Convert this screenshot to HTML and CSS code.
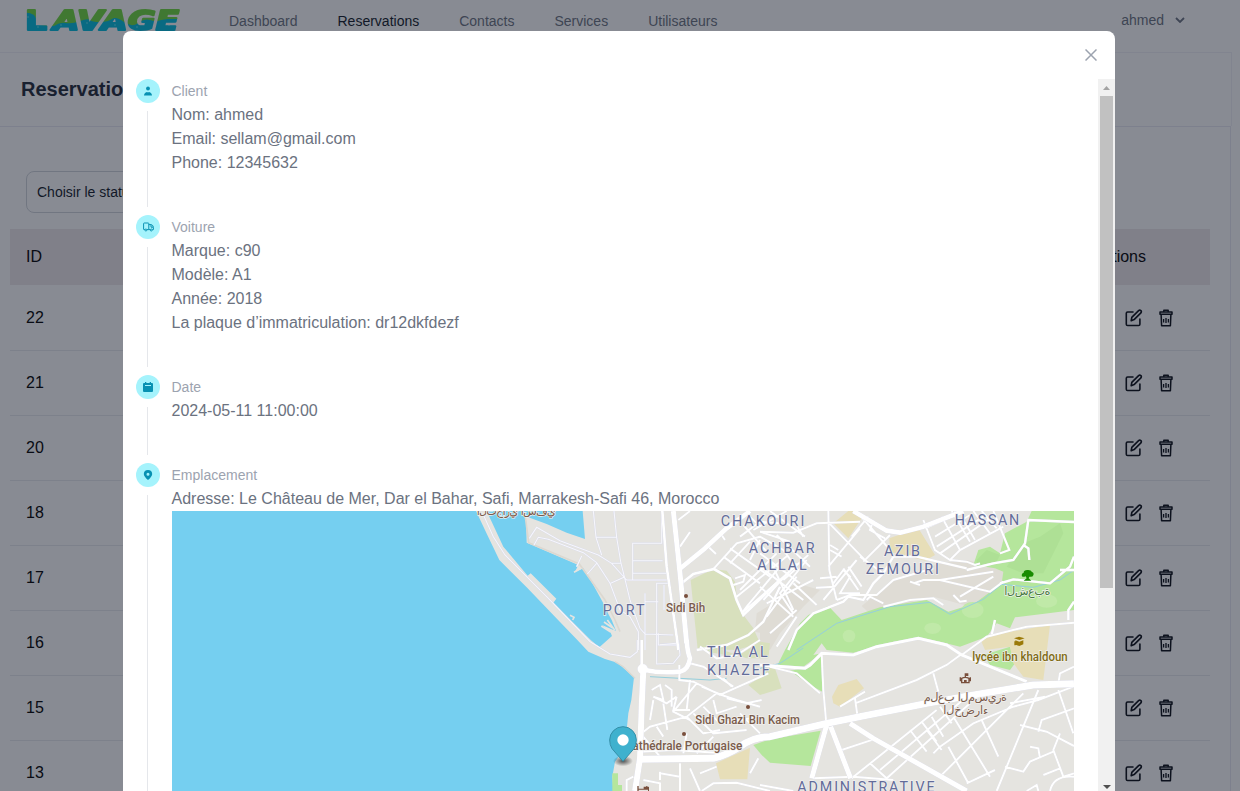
FILE: index.html
```html
<!DOCTYPE html>
<html lang="fr">
<head>
<meta charset="utf-8">
<title>Reservations</title>
<link rel="stylesheet" href="styles.css">
</head>
<body>
<svg class="defs" width="0" height="0">
  <symbol id="edit" viewBox="0 0 18 18"><g fill="none" stroke="currentColor" stroke-width="1.600" stroke-linecap="round" stroke-linejoin="round"><path d="M8 3H2.6Q1.3 3 1.3 4.300V15.200Q1.300 16.500 2.600 16.500H13.600Q14.900 16.500 14.900 15.200V10"/><path d="M6.200 11.700l.6-3.300 6.800-6.800q1.100-.9 2.300 0 .9 1.100 0 2.300l-6.800 6.700z"/></g></symbol>
  <symbol id="trash" viewBox="0 0 14 18"><g fill="none" stroke="currentColor" stroke-width="1.500" stroke-linejoin="round"><path d="M1 3h12v2.200H1zM4.800 3V1.200h4.400V3M2.100 5.300l.5 11.400h8.800l.5-11.400"/><path d="M4.600 10v3.400M7 9v5M9.400 10v3.400" stroke-width="1.300"/></g></symbol>
</svg>
<div class="page">
  <nav class="nav">
    <svg class="logo" width="160" height="28" viewBox="0 0 160 28">
      <mask id="logo-text">
        <text class="logo-l" x="1" y="22" textLength="22" lengthAdjust="spacingAndGlyphs">L</text>
        <text class="logo-rest" x="29" y="22" textLength="126" lengthAdjust="spacingAndGlyphs">AVAGE</text>
      </mask>
      <g mask="url(#logo-text)">
        <path fill="#6fd83d" d="M0 0h160v28H0z"/>
        <path fill="#00bcdd" d="M0 5q5-1 10 2l6 10 14 1q6-4 12-3t14-2 10-1 10 2 12-3 12 3 14 1 12-3 8 1 10-2h16v18H0z"/>
        <g fill="#38d6ea"><circle cx="4" cy="9" r="1"/><circle cx="14" cy="19" r="1"/><circle cx="37" cy="17" r="1"/><circle cx="63" cy="15" r="1"/><circle cx="91" cy="17" r="1"/><circle cx="113" cy="19" r="1"/><circle cx="145" cy="17" r="1"/></g>
      </g>
    </svg>
    <div class="links"><a>Dashboard</a><a class="current">Reservations</a><a>Contacts</a><a>Services</a><a>Utilisateurs</a></div>
    <div class="user">ahmed <svg width="10" height="6" viewBox="0 0 10 6"><path d="M1 1l4 4 4-4" fill="none" stroke="currentColor" stroke-width="1.800"/></svg></div>
  </nav>
  <header class="heading"><h1>Reservations</h1></header>
  <main class="panel">
    <div class="select">Choisir le status</div>
    <div class="table">
      <div class="row head"><span>ID</span><span>Actions</span></div>
      <div class="row"><span>22</span><div class="tools"><svg class="e"><use href="#edit"/></svg><svg class="t"><use href="#trash"/></svg></div></div>
      <div class="row"><span>21</span><div class="tools"><svg class="e"><use href="#edit"/></svg><svg class="t"><use href="#trash"/></svg></div></div>
      <div class="row"><span>20</span><div class="tools"><svg class="e"><use href="#edit"/></svg><svg class="t"><use href="#trash"/></svg></div></div>
      <div class="row"><span>18</span><div class="tools"><svg class="e"><use href="#edit"/></svg><svg class="t"><use href="#trash"/></svg></div></div>
      <div class="row"><span>17</span><div class="tools"><svg class="e"><use href="#edit"/></svg><svg class="t"><use href="#trash"/></svg></div></div>
      <div class="row"><span>16</span><div class="tools"><svg class="e"><use href="#edit"/></svg><svg class="t"><use href="#trash"/></svg></div></div>
      <div class="row"><span>15</span><div class="tools"><svg class="e"><use href="#edit"/></svg><svg class="t"><use href="#trash"/></svg></div></div>
      <div class="row"><span>13</span><div class="tools"><svg class="e"><use href="#edit"/></svg><svg class="t"><use href="#trash"/></svg></div></div>
    </div>
  </main>
</div>
<div class="overlay">
  <section class="modal">
    <div class="modal-top"><svg width="12" height="12" viewBox="0 0 12 12"><path d="M.5.5l11 11m0-11l-11 11" fill="none" stroke="#9ca3af" stroke-width="1.500"/></svg></div>
    <div class="modal-body">
      <div class="timeline">
        <div class="item">
          <div class="rail"><i class="dot"><svg width="10" height="10" viewBox="0 0 10 10"><circle cx="5" cy="2.500" r="1.900"/><path d="M1 9.500q.2-3 3-3.500l1 .5 1-.5q2.800.5 3 3.500z"/></svg></i><b></b></div>
          <div class="text"><h3>Client</h3><p>Nom: ahmed</p><p>Email: sellam@gmail.com</p><p>Phone: 12345632</p></div>
        </div>
        <div class="item">
          <div class="rail"><i class="dot"><svg width="11" height="10" viewBox="0 0 11 10"><path d="M1.900 7.600H.9Q.6 7.600.6 7.200V1.600Q.6 1 1.200 1h4q.6 0 .6.600v6H3.900M5.800 2.600h2.500q2 .6 2.100 2.900v2.100H9.300M7.300 7.600H5.800M8 2.800v2.400h2.300" fill="none" stroke="#0891b2" stroke-width="1"/><circle cx="2.900" cy="8" r="1" fill="none" stroke="#0891b2" stroke-width=".9"/><circle cx="8.300" cy="8" r="1" fill="none" stroke="#0891b2" stroke-width=".9"/></svg></i><b></b></div>
          <div class="text"><h3>Voiture</h3><p>Marque: c90</p><p>Modèle: A1</p><p>Année: 2018</p><p>La plaque d’immatriculation: dr12dkfdezf</p></div>
        </div>
        <div class="item">
          <div class="rail"><i class="dot"><svg width="10" height="10" viewBox="0 0 10 10"><path d="M1 1h1V0h1.300v1h3.400V0H8v1h1q1 0 1 1v7q0 1-1 1H1q-1 0-1-1V2q0-1 1-1z"/><path d="M2 3.500h6" stroke="#a5f3fc"/></svg></i><b></b></div>
          <div class="text"><h3>Date</h3><p>2024-05-11 11:00:00</p></div>
        </div>
        <div class="item last">
          <div class="rail"><i class="dot"><svg width="10" height="10" viewBox="0 0 10 10"><path fill-rule="evenodd" d="M5 0q4 .1 4.200 4Q9 6.700 5 10 1 6.700.8 4 1 .1 5 0zm0 2.700a1.500 1.500 0 100 3 1.500 1.500 0 000-3z"/></svg></i><b></b></div>
          <div class="text"><h3>Emplacement</h3><p>Adresse: Le Château de Mer, Dar el Bahar, Safi, Marrakesh-Safi 46, Morocco</p>
<svg class="map" width="902" height="280" viewBox="-864 33 2706 840">
  <rect x="-864" y="33" width="2706" height="840" fill="#e5e4e0"/>
  <!-- relief shading -->
  <g fill="#dfdcd5">
    <path d="M1205 318L1245 285 1300 240 1440 190 1520 180 1600 200 1640 210 1700 205 1728 220 1726 250 1640 305 1570 330 1420 290 1300 320 1240 350z"/>
    <path d="M900 350L960 280 1010 250 1080 270 1030 320 960 400 930 450 900 450zM890 340l40-25v90l-45-10z"/>
  </g>
  <!-- water -->
  <g fill="#75cff0">
    <path d="M-864 33H48L82 105 118 180 200 262 300 366 352 420 385 455 435 477 472 488 522 532 514 600 505 640 500 690 490 750 465 785 457 830 460 873H-864z"/>
    <path d="M80 33H190L198 58 200 128 355 195 345 215 370 205 400 255 430 310 445 342 455 360 468 392 455 388 426 375 452 398 456 408 418 442 392 420 280 308 289 296 212 220 203 227 130 140z"/>
    <path d="M190 33L205 52 260 72 320 98 375 117 368 33z"/>
  </g>
  <path d="M196 50L206 128 358 192 435 300 465 360 480 395" fill="none" stroke="#dcd8d0" stroke-width="5"/>
  <path d="M465 485L490 500 525 535" fill="none" stroke="#dcd8d0" stroke-width="4"/>
  <path d="M342 217l22-12M424 378l28 18M432 366l26 18M442 360l22 30M330 346l12 6-4 8" fill="none" stroke="#e5e4e0" stroke-width="5"/>
  <!-- parks -->
  <g fill="#d8e0bd">
    <path d="M692 240L760 207 800 212 825 245 832 300 850 345 880 385 900 430 830 450 713 447 703 350z"/>
    <path d="M715 420L740 455 830 470 900 425 930 430 925 475 860 475 760 440z"/>
    <path d="M865 555L910 525 940 490 965 565 900 585z"/>
  </g>
  <g fill="#b5e69c">
    <path d="M975 450L1020 370 1045 345 1105 318 1145 360 1260 322 1400 300 1465 335 1545 310 1625 250 1630 215 1605 205 1540 195 1555 150 1590 140 1620 160 1635 100 1700 65 1715 33H1842V330L1765 340 1665 352 1650 385 1610 370 1580 410 1500 440 1440 425 1375 415 1300 425 1180 458 1100 450 1085 430 1060 465 1085 460 1030 500 950 500z"/>
    <path d="M990 512L1035 505 1087 462 1087 575 1050 555z"/>
    <path d="M880 735L930 718 1082 692 1052 798 930 788 905 765z"/>
    <path d="M1570 465L1650 440 1665 490 1650 510 1590 495zM457 820h17v35h12v18h-29z"/>
  </g>
  <g fill="#c0e9a8"><circle cx="1167" cy="408" r="19"/><ellipse cx="1418" cy="385" rx="25" ry="17"/><ellipse cx="1538" cy="330" rx="33" ry="24"/><ellipse cx="1760" cy="303" rx="32" ry="20"/></g>
  <path d="M1640 200L1690 130 1740 110 1800 70 1810 100 1770 180 1750 220 1690 220zM1550 180l30-30 40 15-10 20-60 12z" fill="#aee095"/>
  <g fill="#e7deb8">
    <path d="M1120 70L1165 33 1190 33 1205 55 1165 115zM1288 115L1375 85 1425 165 1395 182 1290 155z"/>
    <path d="M1562 420L1620 400 1770 375 1750 540 1690 530 1660 490 1650 440 1575 450z"/>
    <path d="M1116 590L1135 555 1190 537 1212 565 1140 620 1120 610z"/>
    <path d="M768 790L870 743 862 838 780 838z"/>
  </g>
  <path d="M1010 450L1130 370 1290 320 1410 307 1470 343 1570 298 1625 253 1720 262 1800 240 1842 210M1030 444L960 490 900 505M570 530L750 540 800 535" fill="none" stroke="#95cfdc" stroke-width="3"/>
  <!-- minor streets: pale casing then white core -->
  <g fill="none" stroke="#d6d8ea" stroke-width="5">
    <path d="M68 40L100 110 135 165 260 290 390 425 450 462 510 472 532 455V420"/>
    <path d="M208 115L230 82 300 122 415 165 455 190 500 240 620 240M222 135L235 112 265 118 370 158 410 188 450 250 480 330 510 350 535 395 536 450M400 33L408 112 425 165M462 33L470 112 482 185 510 300 540 385 555 402 640 405M408 112H470M382 222L410 190M350 200L365 168M452 250L495 230M605 33V130H518V240M518 182H608M518 220H620M590 420V250H625M612 255V330M555 280V450M555 305H595M595 400V435H650M455 190H482"/>
    <path d="M590 420V492L640 490 660 465 655 420M600 434L650 430"/>
  </g>
  <g fill="none" stroke="#f7f7fb" stroke-width="3.200">
    <path d="M68 40L100 110 135 165 260 290 390 425 450 462 510 472 532 455V420"/>
    <path d="M208 115L230 82 300 122 415 165 455 190 500 240 620 240M222 135L235 112 265 118 370 158 410 188 450 250 480 330 510 350 535 395 536 450M400 33L408 112 425 165M462 33L470 112 482 185 510 300 540 385 555 402 640 405M408 112H470M382 222L410 190M350 200L365 168M452 250L495 230M605 33V130H518V240M518 182H608M518 220H620M590 420V250H625M612 255V330M555 280V450M555 305H595M595 400V435H650M455 190H482"/>
    <path d="M590 420V492L640 490 660 465 655 420M600 434L650 430"/>
  </g>
  <g class="street">
    <path d="M655 60L690 33M660 140L690 96M745 140L768 162M785 105L795 120"/>
    <path d="M762 205L830 130 900 110 970 150 1010 205 970 240M790 170L900 250M810 145L930 230M810 190L870 125M840 270L950 160M830 290L985 165M845 340L1045 165M825 235L855 225 850 245 820 255M845 340L860 320 960 200M900 80L860 40M880 90L980 33M850 75L920 155M840 110L900 65 960 70M930 33L1035 110M900 95L990 125M950 105L1050 200M1000 60L1030 110"/>
    <path d="M665 250L700 222 762 207 810 235 830 300 850 345 960 240" stroke-width="8"/>
    <path d="M710 450L800 435 865 405 910 365 960 260M985 450L1010 390 1060 340 1150 305 1165 290 1210 300 1240 250 1270 220 1300 170 1370 170 1520 205" stroke-width="7"/>
    <path d="M900 95L1000 98 1070 70 1200 65M1105 33L1108 210 1130 300M1108 70L1225 190M1200 85L1105 200M1225 50L1175 110M1200 45L1290 150M1290 105L1210 185M1190 180L1090 300M1135 150L1110 135M1145 170L1110 150M1080 235L1130 230M1068 263L1125 260M1150 205L1195 270M1165 200L1205 260M1120 250L1150 210 1170 230 1140 280 1200 280M1130 300L1170 285 1250 285 1300 240 1420 205M1200 170L1270 220M1240 60L1230 90 1275 115"/>
    <path d="M1390 60L1425 150 1470 180 1500 150 1630 80M1395 85L1450 60 1490 33M1425 110L1530 45M1430 140L1570 50M1440 160L1590 55M1445 50L1500 150M1475 33L1530 125M1510 60L1545 120M1540 33L1590 100M1565 33L1610 85M1600 33L1648 150 1620 160M1470 180L1520 185 1545 195 1560 190M1360 250L1390 240 1440 240 1590 275 1630 245M1380 255L1350 245M1440 240L1600 215M1500 290L1600 230M1480 285L1500 305 1520 302M1270 310L1230 290 1220 300M1270 320L1350 300 1420 295 1450 315"/>
    <path d="M1520 210L1600 190 1660 180 1695 130 1705 60 1842 66M1690 135L1705 145 1708 180M1620 250L1660 238 1770 250 1830 200 1842 170M1800 210H1842M1605 360L1595 405M1842 305L1825 330V360" stroke-width="7"/>
    <path d="M900 120L870 180M900 160L1020 250M900 200L1030 300M930 180L1000 330M910 300L1010 190M920 310L1060 240M1040 180L960 280 1000 340M900 260L1000 350M920 350L1010 230M930 400L1010 330M950 440L1010 350M1000 250L1070 315"/>
  </g>
  <g class="street">
    <path d="M720 440L770 475 830 465 900 420M690 490L730 500 820 560M658 495V540L700 545 780 585 925 520M790 535L815 560M725 560L785 585 830 600 900 620M710 550L640 635 690 660M690 540L680 630M575 570L600 555 610 600 580 590 620 610 650 590M615 555L635 570 635 620M570 660L580 600M610 610L622 690M650 590L640 630 690 630M545 700L570 680 680 650 770 580M545 705L600 770M590 680L610 710M680 650L730 700 780 690M700 640L760 700 860 690M730 620L780 670 900 650M760 600L770 640 830 620M670 760L680 700M710 760L760 710M800 595L860 610 905 600M840 640L900 700M540 755L640 750 770 758M660 790V873M600 820L660 830M690 805L720 873M720 820L770 800M500 873V840L520 830M550 840L600 850 600 873M600 815V840"/>
    <path d="M900 495L1035 505 1050 495 1085 460 1180 465 1250 440 1375 415 1460 435 1505 465 1700 545" stroke-width="9"/>
    <path d="M1085 460L1090 570 1098 660M1505 465L1580 410 1700 380 1842 368M1505 462L1460 495 1370 540 1185 610M1420 520L1435 575M1140 620L1215 575M1185 595L1192 645"/>
    <path d="M1145 750L1250 715M1175 835L1430 630M1230 790L1280 835 1530 610M1260 810L1520 590M1350 690L1400 755M1385 665L1430 725M1415 650L1450 710M1440 620L1475 670M1400 690L1445 750M1565 660L1615 770M1465 740L1525 850M1480 650L1590 830M1440 830L1690 580M1520 850L1605 810M1650 610L1755 590M1840 560L1735 600 1660 620 1540 670 1440 740 1420 760"/>
    <path d="M1735 570L1610 873M1680 675L1760 695 1842 738M1735 695L1745 660 1842 625M1800 700L1780 750 1810 830 1842 820M1795 570L1840 700M1842 500L1800 520 1795 550M1635 800L1690 815 1710 785 1780 755M1710 740L1735 745 1740 775M1750 825L1800 805M1770 873Q1780 825 1842 830M1060 835L1180 830 1300 840M1700 873L1730 855 1735 873"/>
    <path d="M725 873L760 850 830 848 930 873M900 855L1000 873M870 820L895 775M930 500L1010 520 1080 580"/>
  </g>
  <!-- main roads -->
  <g class="main">
    <path d="M607 33L620 200 650 410 655 450" stroke-width="8"/>
    <path d="M640 33L660 220 680 430" stroke-width="15"/>
    <path d="M655 210L735 145 800 85 870 33" stroke-width="14"/>
    <path d="M1180 33L1280 92 1320 98 1390 80 1480 45 1510 33" stroke-width="14"/>
    <path d="M680 420Q682 455 690 475 685 510 660 515 600 520 555 510" stroke-width="14"/>
    <path d="M545 420V500" stroke-width="8"/>
    <path d="M550 508L545 620 540 775 525 873" stroke-width="18"/>
    <circle cx="548" cy="507" r="15" fill="#fff"/>
    <path d="M540 778L760 775 Q800 765 840 740 880 710 930 710L1100 670 1200 650 1400 610 1550 583 1720 555 1842 551" stroke-width="21"/>
    <path d="M1100 675L1055 835M1112 680L1172 835M1170 670L1240 715 1520 873" stroke-width="15"/>
  </g>
  <g fill="#794f3c"><circle cx="678" cy="288" r="6"/><circle cx="864" cy="621" r="6"/><circle cx="672" cy="702" r="6"/><path d="M532 858h4v8h15v-6h7v-2l9 3v12h-3v-4h-28v4h-4z"/></g>
  <!-- stadium -->
  <path d="M1505 535q11-6 22 0v13h-22zM1501 532v12M1531 532v12M1516 533V522h7v4h-6" fill="none" stroke="#794f3c" stroke-width="4"/>
  <path d="M1512 540h8v8h-8z" fill="#794f3c"/>
  <path d="M1686 229q-3-8 5-11 0-8 11-8 11-1 14 6 7 3 4 10-2 6-12 4l-2 5 8 7h-23l9-7-3-6q-8 3-11 0z" fill="#198c00"/>
  <path d="M1662 415l15-5 17 5-15 5zM1666 421l12 4 12-4v12l-12 5-12-4zM1663 424h4v12h-4z" fill="#9b7a08"/>
  <g class="area">
    <text x="782" y="77" textLength="251">CHAKOURI</text><text x="866" y="159" textLength="198">ACHBAR</text><text x="892" y="211" textLength="148">ALLAL</text>
    <text x="1484" y="74" textLength="194">HASSAN</text><text x="1272" y="168" textLength="108">AZIB</text><text x="1217" y="221" textLength="220">ZEMOURI</text>
    <text x="428" y="346" textLength="126">PORT</text><text x="741" y="472" textLength="182">TILA AL</text><text x="741" y="525" textLength="188">KHAZEF</text><text x="1012" y="875" textLength="412">ADMINISTRATIVE</text>
  </g>
  <g class="poi">
    <text x="618" y="336" textLength="118" lengthAdjust="spacingAndGlyphs">Sidi Bih</text><text x="706" y="671" textLength="314" lengthAdjust="spacingAndGlyphs">Sidi Ghazi Bin Kacim</text><text x="494" y="749" textLength="353" lengthAdjust="spacingAndGlyphs">Cathédrale Portugaise</text>
    <text x="1537" y="482" textLength="286" lengthAdjust="spacingAndGlyphs" class="gold">lycée ibn khaldoun</text>
    <text x="50" y="45" textLength="237" class="ar">ا‌ل‌ت‌ج‌ا‌ر‌ي ا‌س‌ف‌ي</text>
    <text x="1391" y="602" textLength="250" class="ar">م‌ل‌ع‌ب ا‌ل‌م‌س‌ي‌ر‌ة</text><text x="1450" y="641" textLength="135" class="ar">ا‌ل‌خ‌ض‌ر‌ا‌ء</text>
    <text x="1633" y="286" textLength="138" class="ar green">ا‌ل‌ش‌ع‌ب‌ة</text>
  </g>
  <radialGradient id="shade"><stop offset="0" stop-opacity=".65"/><stop offset="1" stop-opacity="0"/></radialGradient>
  <ellipse cx="489" cy="783" rx="30" ry="16" fill="url(#shade)"/>
  <path d="M489 784L456 746Q449 735 449 720A40 40 0 01529 720Q529 735 522 746z" fill="#3fb1ce" stroke="#348fa8" stroke-width="3"/>
  <circle cx="489" cy="720" r="17" fill="#fff"/>
</svg></div>
        </div>
      </div>
      <div class="scrollbar"><svg width="17" height="17"><path d="M5 11l3.500-4L12 11z" fill="#a3a3a3"/></svg><div class="thumb"></div><svg width="17" height="14"><path d="M5 8h8l-4 4z" fill="#505050"/></svg></div>
    </div>
  </section>
</div>
</body>
</html>
```
FILE: styles.css
```css
* { box-sizing: border-box; }
body { margin: 0; width: 1240px; height: 791px; overflow: hidden; background: #fff; font-family: "Liberation Sans", Arial, sans-serif; color: #111827; }
h1, h3, p { margin: 0; }
svg { display: block; flex: none; }
.defs { position: absolute; }
.page { height: 791px; overflow: hidden; }
.nav { display: flex; height: 52px; padding: 8px 55px 0 24px; }
.logo-l, .logo-rest { font: bold 27px "DejaVu Sans", sans-serif; fill: #fff; stroke: #fff; stroke-width: 2; stroke-linejoin: round; }
.logo-rest { font-style: oblique; }
.links { display: flex; gap: 40px; padding: 5px 0 0 45px; font-size: 14px; line-height: 16px; color: #6b7280; }
.links .current { color: #111827; }
.user { display: flex; gap: 11px; align-items: center; height: 24px; margin-left: auto; font-size: 14px; color: #6b7280; }
.heading { width: 1232px; height: 74px; border: 1px solid #f0f0f6; border-left: 0; border-bottom: 0; padding: 24px 21px; }
h1 { font-size: 20px; line-height: 24px; color: #1f2937; }
.panel { width: 1231px; height: 670px; border: 1px solid #e8e8f2; border-left: 0; padding: 44px 20px 0 10px; }
.select { width: 220px; height: 42px; margin-left: 16px; border: 1px solid #d1d5db; border-radius: 8px; padding: 0 10px; font-size: 14px; line-height: 40px; }
.table { margin-top: 16px; }
.row { display: flex; justify-content: space-between; align-items: center; height: 65px; padding: 0 37px 0 16px; border-bottom: 1px solid #e8eaef; color: #000; }
.row.head { height: 57px; border-bottom: 1px solid #fff; padding-right: 64px; background: #efe8eb; background-clip: padding-box; }
.tools { display: flex; gap: 16px; color: #080c14; padding-bottom: 1px; }
.e { width: 18px; height: 18px; }
.t { width: 14px; height: 18px; }
.overlay { position: absolute; inset: 0; display: flex; justify-content: center; background: rgba(17, 24, 39, .5); padding-top: 31px; overflow: hidden; }
.modal { width: 992px; height: 760px; margin-right: 2px; overflow: hidden; border-radius: 8px 8px 0 0; background: #fff; }
.modal-top { display: flex; justify-content: flex-end; height: 48px; padding: 18px 18px 0; }
.modal-body { display: flex; height: 712px; }
.timeline { flex: 1; min-width: 0; padding-left: 13px; }
.item { display: flex; gap: 12px; }
.rail { display: flex; flex-direction: column; align-items: center; gap: 8px; width: 24px; padding-bottom: 8px; }
.rail b { width: 1px; flex: 1; margin-right: 1px; background: #e5e7eb; }
.dot { display: flex; flex: none; align-items: center; justify-content: center; width: 24px; height: 24px; border-radius: 50%; background: #a5f3fc; fill: #0891b2; }
.text { padding-bottom: 40px; color: #6b7280; margin-left: -.5px; }
.text h3 { font-size: 14px; line-height: 24px; font-weight: 400; color: #9ca3af; }
.text p { font-size: 16px; line-height: 24px; }
.map { margin-left: .5px; overflow: hidden; }
.scrollbar { display: flex; flex-direction: column; justify-content: flex-start; width: 17px; background: #f1f1f1; }
.thumb { width: 13px; height: 492px; margin: 0 2px auto; background: #c1c1c1; }
.street { fill: none; stroke: #fff; stroke-width: 6; filter: drop-shadow(0 0 1px #cfd1e3); }
.main { fill: none; stroke: #fff; filter: drop-shadow(0 0 2px #c8cae0); stroke-linejoin: round; }
.area { font: 400 43px "Roboto", sans-serif; fill: #636c99; stroke: #f1f1f2; stroke-width: 4; paint-order: stroke; }
.poi { font: 500 36px "Roboto", sans-serif; fill: #7a5c4c; stroke: #f2f1ef; stroke-width: 4; paint-order: stroke; }
.ar { direction: ltr; unicode-bidi: bidi-override; font: 34px "DejaVu Sans", sans-serif; }
.poi .gold { fill: #806b14; }
.poi .green { fill: #477b40; }
```
